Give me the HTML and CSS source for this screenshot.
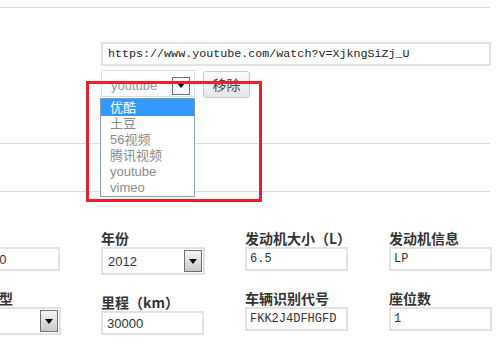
FILE: index.html
```html
<!DOCTYPE html>
<html lang="zh-CN">
<head>
  <meta charset="UTF-8" />
  <meta name="viewport" content="width=device-width, initial-scale=1.0" />
  <title>车辆信息</title>
  <link rel="stylesheet" href="styles.css">
</head>
<body>
  <div class="page">
    <div class="rule rule-top"></div>

    <div class="video">
      <input class="url-input" type="text" value="https://www.youtube.com/watch?v=XjkngSiZj_U" />
      <div class="video-row">
        <div class="video-select">
          <span class="select-text">youtube</span>
          <span class="arrow-box arrow-flat">
            <svg width="8" height="5" viewBox="0 0 8 5"><polygon points="0,0 8,0 4,5" fill="#000"/></svg>
          </span>
        </div>
        <button class="remove-btn">移除</button>
      </div>

      <!-- open dropdown -->
      <ul class="drop-list">
        <li class="active">优酷</li>
        <li>土豆</li>
        <li>56视频</li>
        <li>腾讯视频</li>
        <li>youtube</li>
        <li>vimeo</li>
      </ul>

      <div class="mark-box"></div>
    </div>

    <div class="rule rule-mid"></div>
    <div class="rule rule-low"></div>

    <div class="fields">
      <div class="field-col">
        <div class="field">
          <div class="field-label">价格</div>
          <input class="text-input sans" type="text" value="120000" />
        </div>
        <div class="field">
          <div class="field-label">车身类型</div>
          <div class="field-select">
            <span class="select-value"></span>
            <span class="arrow-box arrow-tall">
              <svg width="8" height="5" viewBox="0 0 8 5"><polygon points="0,0 8,0 4,5" fill="#000"/></svg>
            </span>
          </div>
        </div>
      </div>

      <div class="field-col">
        <div class="field">
          <div class="field-label">年份</div>
          <div class="field-select">
            <span class="select-value">2012</span>
            <span class="arrow-box arrow-tall">
              <svg width="8" height="5" viewBox="0 0 8 5"><polygon points="0,0 8,0 4,5" fill="#000"/></svg>
            </span>
          </div>
        </div>
        <div class="field">
          <div class="field-label">里程（km）</div>
          <input class="text-input sans" type="text" value="30000" />
        </div>
      </div>

      <div class="field-col">
        <div class="field">
          <div class="field-label">发动机大小（L）</div>
          <input class="text-input" type="text" value="6.5" />
        </div>
        <div class="field">
          <div class="field-label">车辆识别代号</div>
          <input class="text-input" type="text" value="FKK2J4DFHGFD" />
        </div>
      </div>

      <div class="field-col">
        <div class="field">
          <div class="field-label">发动机信息</div>
          <input class="text-input" type="text" value="LP" />
        </div>
        <div class="field">
          <div class="field-label">座位数</div>
          <input class="text-input" type="text" value="1" />
        </div>
      </div>
    </div>
  </div>
</body>
</html>
```

FILE: styles.css
```css
body {
  margin: 0;
  background-color: #ffffff;
  font-family: "Liberation Sans", "Noto Sans CJK SC", sans-serif;
  color: #333;
  overflow: hidden;
}

.page {
  width: 498px;
  height: 348px;
  overflow: hidden;
}

.rule {
  width: 490px;
  border-top: 1px solid #dcdcdc;
}

.rule-top {
  margin-top: 7px;
}

.rule-mid {
  margin-top: 45px;
}

.rule-low {
  margin-top: 47px;
}

/* video link block */
.video {
  position: relative;
  margin-top: 34px;
  margin-left: 101px;
}

.url-input {
  display: block;
  box-sizing: border-box;
  width: 390px;
  height: 24px;
  margin: 0;
  padding: 0 0 0 5px;
  border: 2px solid #e2e2e2;
  font-family: "Liberation Mono", monospace;
  font-size: 11.7px;
  color: #222;
  outline: none;
}

.video-row {
  display: flex;
  align-items: flex-start;
  margin-top: 4px;
  height: 28px;
}

.video-select {
  box-sizing: border-box;
  width: 94px;
  height: 27px;
  border: 1px solid #dedede;
  display: flex;
  align-items: center;
  justify-content: space-between;
  padding: 0 4px 0 9px;
}

.select-text {
  font-size: 13px;
  color: #999;
  padding-top: 3px;
}

.arrow-box {
  box-sizing: border-box;
  display: flex;
  align-items: center;
  justify-content: center;
  border: 1px solid #6f6f6f;
}

.arrow-flat {
  width: 18px;
  height: 18px;
  margin-top: 4px;
  background-color: #fafafa;
}

.arrow-tall {
  width: 18px;
  height: 22px;
  background: linear-gradient(#f6f6f6, #c9c9c9);
}

.remove-btn {
  box-sizing: border-box;
  width: 47px;
  height: 27px;
  margin: 1px 0 0 8px;
  padding: 0 0 2px 0;
  border: 1px solid #c8c8c8;
  border-radius: 3px;
  background: linear-gradient(#fdfdfd, #e6e6e6);
  font-family: "Noto Sans CJK SC", sans-serif;
  font-size: 14px;
  color: #444;
}

.drop-list {
  position: absolute;
  left: -1px;
  top: 56px;
  box-sizing: border-box;
  width: 95px;
  margin: 0;
  padding: 0;
  list-style: none;
  border: 1px solid #7f9db9;
  background-color: #fff;
}

.drop-list li {
  height: 16px;
  line-height: 16px;
  padding-left: 9px;
  font-family: "Liberation Sans", "Noto Sans CJK SC", sans-serif;
  font-size: 13px;
  color: #8a8a8a;
}

.drop-list li.active {
  height: 17px;
  line-height: 17px;
  background-color: #3399ff;
  color: #fff;
}

.mark-box {
  position: absolute;
  left: -15px;
  top: 39px;
  box-sizing: border-box;
  width: 176px;
  height: 121px;
  border: 3px solid #e8212b;
}

/* car details */
.fields {
  display: flex;
  gap: 40px;
  margin-top: 39px;
  margin-left: -43px;
}

.field-col {
  width: 104px;
  display: flex;
  flex-direction: column;
}

.field {
  margin-bottom: 20px;
}

.field-label {
  height: 15px;
  line-height: 15px;
  margin-bottom: 1px;
  font-family: "Noto Sans CJK SC", sans-serif;
  font-size: 14px;
  font-weight: bold;
  color: #333;
  white-space: nowrap;
}

.text-input {
  display: block;
  box-sizing: border-box;
  width: 103px;
  height: 24px;
  margin: 0;
  padding: 0 0 0 3px;
  border: 2px solid #e2e2e2;
  font-family: "Liberation Mono", monospace;
  font-size: 12px;
  color: #333;
  outline: none;
}

.text-input.sans {
  font-family: "Liberation Sans", sans-serif;
  font-size: 13px;
  padding-left: 4px;
}

.field-select {
  box-sizing: border-box;
  width: 104px;
  height: 28px;
  border: 2px solid #e2e2e2;
  display: flex;
  align-items: center;
  justify-content: space-between;
  padding: 0 1px 0 5px;
}

.select-value {
  font-size: 13px;
  color: #333;
}
```
